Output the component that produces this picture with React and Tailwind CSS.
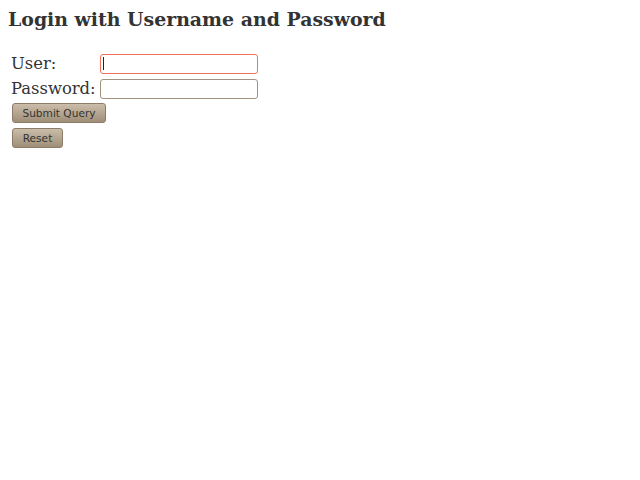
export default function App() {
  return (
    <div className="min-h-[480px] bg-white p-2 text-[#333333]" style={{ fontFamily: '"DejaVu Serif", serif' }}>
      <h1 className="text-[18.9px] font-bold leading-[22px]">Login with Username and Password</h1>
      <div className="mt-[21px] ml-[3px] flex flex-col">
        <div className="flex items-center h-[25px]">
          <span className="w-[89px] text-[16.4px] leading-[19px]">User:</span>
          <div className="w-[158px] h-[20px] rounded-[3px] border border-[#f2735c] bg-white flex items-center pl-[2px]">
            <div className="w-px h-[13px] bg-[#222]" />
          </div>
        </div>
        <div className="flex items-center h-[25px]">
          <span className="w-[89px] text-[16.4px] leading-[19px]">Password:</span>
          <div className="w-[158px] h-[20px] rounded-[3px] border border-[#a09480] bg-white" />
        </div>
        <div className="flex flex-col items-start gap-[5px] ml-[1px] mt-[2px]" style={{ fontFamily: '"DejaVu Sans", sans-serif' }}>
          <button className="h-[20px] w-[94px] rounded-[3px] border border-[#8c7c68] bg-gradient-to-b from-[#cabda9] to-[#9f8f79] text-[10.6px] text-[#333333] leading-none">Submit Query</button>
          <button className="h-[20px] w-[51px] rounded-[3px] border border-[#8c7c68] bg-gradient-to-b from-[#cabda9] to-[#9f8f79] text-[10.6px] text-[#333333] leading-none">Reset</button>
        </div>
      </div>
    </div>
  );
}
